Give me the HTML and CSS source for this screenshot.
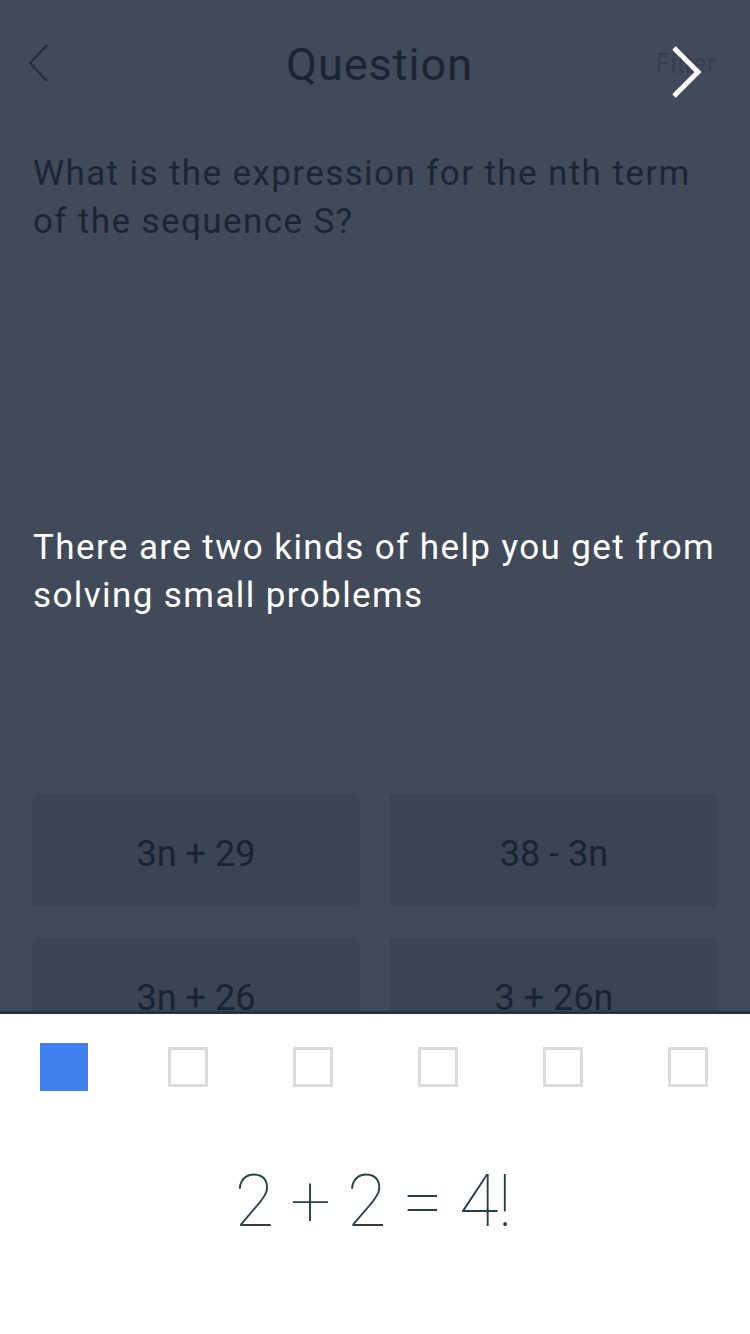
FILE: index.html
```html
<!DOCTYPE html>
<html>
<head>
<meta charset="utf-8">
<link rel="stylesheet" href="styles.css">
</head>
<body>
<div class="screen">
  <div class="stage">
    <header class="nav">
      <svg class="back" width="24" height="40" viewBox="0 0 24 40"><polyline points="19,2 2,20 19,38" fill="none" stroke="#232c3a" stroke-width="2"/></svg>
      <h1 class="title">Question</h1>
      <span class="filter">Filter</span>
      <svg class="next" width="34" height="52" viewBox="0 0 34 52"><polyline points="4,2 28,26 4,50" fill="none" stroke="#ffffff" stroke-width="5"/></svg>
    </header>
    <p class="question">What is the expression for the nth term of the sequence S?</p>
    <p class="help">There are two kinds of help you get from solving small problems</p>
    <div class="answers">
      <div class="answer">3n + 29</div>
      <div class="answer">38 - 3n</div>
      <div class="answer">3n + 26</div>
      <div class="answer">3 + 26n</div>
    </div>
  </div>
  <footer class="panel">
    <div class="steps">
      <div class="cell"><span class="box active"></span></div>
      <div class="cell"><span class="box"></span></div>
      <div class="cell"><span class="box"></span></div>
      <div class="cell"><span class="box"></span></div>
      <div class="cell"><span class="box"></span></div>
      <div class="cell"><span class="box"></span></div>
    </div>
    <div class="equation">2 + 2 = 4!</div>
  </footer>
</div>
</body>
</html>
```
FILE: styles.css
```css
* { box-sizing: border-box; }
html, body { margin: 0; padding: 0; }
body {
  width: 750px;
  height: 1334px;
  overflow: hidden;
  font-family: Roboto, "Liberation Sans", sans-serif;
  background: #414a58;
}
.screen {
  width: 750px;
  height: 1334px;
  display: flex;
  flex-direction: column;
}
.stage {
  height: 1014px;
  flex: none;
  overflow: hidden;
  background: #414a58;
  border-bottom: 3px solid #29313d;
}
.nav {
  position: relative;
  height: 130px;
  display: flex;
  align-items: center;
  justify-content: center;
}
.back {
  position: absolute;
  left: 28px;
  top: 43px;
}
.title {
  margin: 0 0 2px 9px;
  font-weight: 400;
  font-size: 45px;
  color: #1b2434;
  letter-spacing: 1px;
}
.filter {
  position: absolute;
  right: 34px;
  top: 48px;
  font-size: 27px;
  color: #363f4d;
}
.next {
  position: absolute;
  left: 670px;
  top: 46px;
}
.question {
  margin: 20px 33px 0;
  font-size: 35px;
  line-height: 48px;
  letter-spacing: 1.4px;
  color: #1c2535;
}
.help {
  margin: 278px 33px 0;
  font-size: 35px;
  line-height: 48px;
  letter-spacing: 1.4px;
  color: #ffffff;
}
.answers {
  margin: 174px 32px 0;
  display: grid;
  grid-template-columns: 1fr 1fr;
  column-gap: 30px;
  row-gap: 31px;
}
.answer {
  height: 113px;
  border-radius: 6px;
  background: #3b4453;
  display: flex;
  align-items: center;
  justify-content: center;
  font-size: 36px;
  color: #1a2333;
  padding-top: 6px;
}
.panel {
  flex: 1;
  background: #ffffff;
}
.steps {
  display: grid;
  grid-template-columns: repeat(6, 1fr);
  height: 104px;
  align-items: center;
  padding-top: 2px;
}
.cell {
  display: flex;
  justify-content: center;
}
.box {
  width: 40px;
  height: 40px;
  border: 3px solid #d9dcdb;
}
.box.active {
  width: 48px;
  height: 48px;
  border: none;
  background: #4180ef;
  margin-left: 3px;
}
.equation {
  margin-top: 44px;
  margin-right: 4px;
  text-align: center;
  font-size: 72px;
  font-weight: 100;
  color: #2d3e46;
  line-height: 80px;
  letter-spacing: -0.5px;
}
```
